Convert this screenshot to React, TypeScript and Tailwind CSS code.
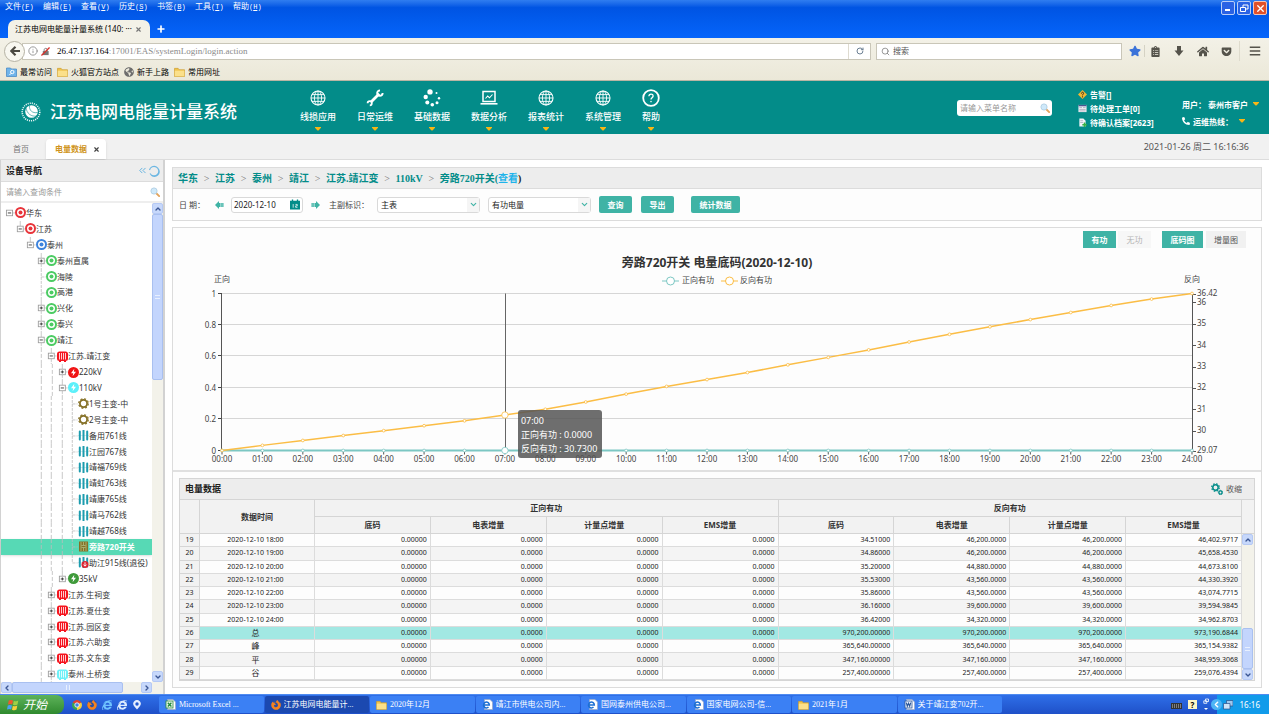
import React from "react";
import {
  FaStar, FaClipboardList, FaHome, FaGetPocket, FaBars, FaPhoneAlt,
  FaGlobeAmericas, FaInternetExplorer, FaFirefoxBrowser,
} from "react-icons/fa";
import { Search, RotateCw, ChevronDown, ChevronUp, ChevronLeft, ChevronRight, ChevronsLeft, Info, X, Plus } from "lucide-react";

/* ---------- small drawings ---------- */

const Caret = ({ className = "" }: { className?: string }) => (
  <svg viewBox="0 0 6 4" className={`h-[4px] w-[6px] shrink-0 ${className}`}><path d="M0 0h6v.8L3.500 3.400h-1L0 .8z" fill="#f9b615" /></svg>
);

const Folder = () => (
  <svg viewBox="0 0 12 11" className="h-[10px] w-[11px] shrink-0">
    <path d="M.5 1.500h4l1 1.500h6v7.500H.5z" fill="#f0c34a" stroke="#c99a2a" strokeWidth=".7" />
    <path d="M.8 4h10.500v6.200H.8z" fill="#fbe08a" />
  </svg>
);

const Magnifier = () => (
  <svg viewBox="0 0 12 12" className="h-[10px] w-[10px] shrink-0">
    <path d="M7.500 7.500l3.500 3.500" stroke="#e3a45c" strokeWidth="2.200" strokeLinecap="round" />
    <circle cx="4.800" cy="4.800" r="3.700" fill="#cfe9fa" stroke="#b4d2e6" strokeWidth="1.200" />
  </svg>
);

const GridGlobe = () => (
  <svg viewBox="0 0 18 18" className="h-[18px] w-[18px]" fill="none" stroke="#fff">
    <circle cx="9" cy="9" r="7" strokeWidth="1.100" />
    <ellipse cx="9" cy="9" rx="3.600" ry="7" strokeWidth=".9" />
    <path d="M9 2v14M2 9h14M3 5.600h12M3 12.400h12" strokeWidth=".9" />
  </svg>
);

const SlimWrench = () => (
  <svg viewBox="0 0 18 18" className="h-[18px] w-[18px]" fill="none" stroke="#fff">
    <path d="M4.800 13.200l8.400-8.400" strokeWidth="2.800" />
    <path d="M14 1.400A2.700 2.700 0 1 0 16.600 4" strokeWidth="2" />
    <path d="M1.600 14.200A2.100 2.100 0 1 1 3.800 16.400" strokeWidth="1.800" />
  </svg>
);

const DotRing = () => (
  <svg viewBox="0 0 18 18" className="h-[18px] w-[18px]" fill="#fff">
    <circle cx="7" cy="2.900" r="2.700" /><circle cx="2.700" cy="8" r="2.200" /><circle cx="4.300" cy="13.500" r="2" />
    <circle cx="9.300" cy="15.700" r="1.800" /><circle cx="14" cy="13.800" r="1.500" /><circle cx="16" cy="9.300" r="1.200" />
    <circle cx="13.500" cy="4" r="1" />
  </svg>
);

const LaptopChart = () => (
  <svg viewBox="0 0 18 18" className="h-[18px] w-[18px]" fill="none" stroke="#fff">
    <path d="M3 2.500h12v10H3z" strokeWidth="1.500" />
    <path d="M.5 14.800h17" strokeWidth="1.600" />
    <path d="M5.500 9.500l2.200-2.500 1.800 1.800 3-3.300" strokeWidth="1.100" />
  </svg>
);

const HelpRing = () => (
  <svg viewBox="0 0 18 18" className="h-[18px] w-[18px]" fill="none" stroke="#fff">
    <circle cx="9" cy="9" r="7.800" strokeWidth="1.800" />
    <path d="M6.900 7.300c0-3 4.400-2.900 4.200-.2-.1 1.600-2.100 1.700-2.100 3.400" strokeWidth="1.300" />
    <circle cx="9" cy="12.600" r=".5" strokeWidth=".8" />
  </svg>
);

const GridLogo = () => (
  <svg viewBox="0 0 20 20" className="h-[20px] w-[20px] shrink-0">
    <circle cx="10" cy="10" r="8.800" fill="none" stroke="#e9f7f6" strokeWidth="1.600" strokeDasharray="1.100 1" />
    <circle cx="10.500" cy="9.500" r="6.300" fill="#fff" />
    <path d="M5 6c1 5.500 5 9 11 8M8.500 3.500c-.5 5 3 8 8 7" stroke="#038c89" strokeWidth=".6" fill="none" />
  </svg>
);

const ArrowHand = ({ flip = false }: { flip?: boolean }) => (
  <svg viewBox="0 0 9 8" className={flip ? "h-[8px] w-[9px] -scale-x-100" : "h-[8px] w-[9px]"}>
    <path d="M0 4l4-4v2h4.500v4H4v2z" fill="#3fb3a5" /><path d="M5.500 2v4M7 2v4" stroke="#e9f7f5" strokeWidth=".5" />
  </svg>
);

const CalendarGlyph = () => (
  <svg viewBox="0 0 11 11" className="h-[11px] w-[10px] shrink-0">
    <path d="M0 1.500h2V0h1.500v1.500h4V0H9v1.500h2V11H0z" fill="#038c89" />
    <path d="M3.500 5v4M6 5.400h2v1.600H6.200v1.600h2" stroke="#fff" strokeWidth=".8" fill="none" />
  </svg>
);

const Gears = () => (
  <svg viewBox="0 0 12 12" className="h-[12px] w-[12px]" fill="none" stroke="#038c89">
    <circle cx="4.500" cy="4.500" r="3.800" strokeWidth="1.200" strokeDasharray="1.600 1.400" /><circle cx="4.500" cy="4.500" r="2.700" strokeWidth="1.500" />
    <circle cx="9.500" cy="9.500" r="1.600" strokeWidth="1.300" /><circle cx="9.500" cy="9.500" r="2.200" strokeWidth=".8" strokeDasharray="1 .8" />
  </svg>
);

type Kind = "red" | "blue" | "green" | "station" | "stationCyan" | "boltRed" | "boltCyan" | "boltGreen" | "gear" | "line" | "switch" | "retired";

const ring = (c: string) => (
  <><circle cx="5.500" cy="5.500" r="4.500" fill="#fff" stroke={c} strokeWidth="2" /><circle cx="5.500" cy="5.500" r="2" fill={c} /></>
);
const bolt = (c: string) => (
  <><circle cx="5.500" cy="5.500" r="5.500" fill={c} /><path d="M6.300 1.800L3 6.200h2.200l-.6 3L8 4.700H5.800z" fill="#fff" /></>
);
const station = (c: string) => (
  <><rect x="0" y=".5" width="11" height="9.500" rx="2.500" fill={c} />
    <path d="M2.500 2v6.500M4.500 2v6.500M6.500 2v6.500M8.500 2v6.500" stroke="#fff" strokeWidth=".8" /><path d="M2 10.500h2M7 10.500h2" stroke={c} /></>
);
const lines = (
  <>
    <path d="M0 5.500h11" stroke="#b5dfe5" strokeWidth=".6" />
    <path d="M1.800 1.500v8M5.500 .5v10M9.200 1.500v8" stroke="#1d9cae" strokeWidth="2" strokeLinecap="round" />
  </>
);

const NodeIcon = ({ kind }: { kind: Kind }) => (
  <svg viewBox="0 0 11 11" className="h-[11px] w-[11px] shrink-0">
    {kind === "red" && ring("#e8343a")}
    {kind === "blue" && ring("#3d83dd")}
    {kind === "green" && ring("#4ccb63")}
    {kind === "station" && station("#f5141e")}
    {kind === "stationCyan" && station("#6cf1f7")}
    {kind === "boltRed" && bolt("#f01414")}
    {kind === "boltCyan" && bolt("#5cf0fa")}
    {kind === "boltGreen" && bolt("#3f9a3a")}
    {kind === "gear" && (
      <><circle cx="5.500" cy="5.500" r="4.800" fill="none" stroke="#857026" strokeWidth="1.200" strokeDasharray="2 1.770" />
        <circle cx="5.500" cy="5.500" r="3.600" fill="#fff" stroke="#857026" strokeWidth="1.800" /></>
    )}
    {kind === "line" && lines}
    {kind === "retired" && <>{lines}<circle cx="7" cy="7.500" r="3.500" fill="#dc2430" /><path d="M7 5.300v3.700M5.500 7.600L7 9.200l1.500-1.600" stroke="#fff" strokeWidth=".9" fill="none" /></>}
    {kind === "switch" && <><rect x="1" y=".5" width="9" height="10" fill="#857026" /><path d="M5.500 1v3M5.500 7v3M3.500 4.500h4M3.500 6.500h4M3 1v9M8 1v9" stroke="#b8c98c" strokeWidth=".7" /></>}
  </svg>
);

/* ---------- browser frame ---------- */

const menus: [string, string][] = [["文件", "F"], ["编辑", "E"], ["查看", "V"], ["历史", "S"], ["书签", "B"], ["工具", "T"], ["帮助", "H"]];

const BrowserFrame = () => (
  <div>
    <div className="relative flex h-[38px] flex-col justify-between bg-linear-to-b from-[#2f7df0] via-[#0054e3] via-20% to-[#0665fb]">
      <nav className="flex h-[12px] items-center pl-[5px]">
        {menus.map(([name, key]) => (
          <button key={key} className="w-[38px] text-left text-[8px] leading-[12px] whitespace-nowrap text-white">
            {name}<span className="font-['Liberation_Mono',monospace] text-[7px]">(<u>{key}</u>)</span>
          </button>
        ))}
      </nav>
      <div className="absolute top-[1px] right-[2px] flex gap-[2px]">
        <button aria-label="最小化" className="flex h-[14px] w-[14px] items-end justify-start rounded-[2px] border border-[#b9cdf7] bg-[#2a62e4] p-[3px]"><span className="h-[2px] w-[5px] bg-white" /></button>
        <button aria-label="还原" className="h-[14px] w-[14px] rounded-[2px] border border-[#b9cdf7] bg-[#2a62e4]">
          <svg viewBox="0 0 12 12" className="h-full w-full" fill="none" stroke="#fff"><path d="M5 5V3h5v4H8M2.500 5.500h5v4h-5z" /></svg>
        </button>
        <button aria-label="关闭" className="flex h-[14px] w-[14px] items-center justify-center rounded-[2px] border border-[#f3c4b5] bg-[#e0502a]"><X className="h-[11px] w-[11px] text-white" strokeWidth={3} /></button>
      </div>
      <div className="flex items-end">
        <div className="ml-[8px] flex h-[18px] w-[142px] items-center rounded-t-[7px] bg-[#f3f1e7] pr-[8px] pl-[7px]">
          <span className="flex-1 text-[8px] whitespace-nowrap text-black">江苏电网电能量计量系统 (140: ···</span>
          <X className="h-[7px] w-[7px] text-[#777]" strokeWidth={4} />
        </div>
        <Plus className="mb-[4px] ml-[6px] h-[10px] w-[10px] text-white" strokeWidth={4} />
      </div>
    </div>
    <div className="h-[43px] border-b border-[#b9b5a4] bg-linear-to-b from-[#f3f1e7] to-[#ebe8d8]">
      <div className="flex h-[26px] items-center pl-[4px]">
        <button aria-label="后退" className="z-10 -mr-[3px] flex h-[21px] w-[21px] shrink-0 items-center justify-center rounded-full border border-[#b5b2a4] bg-[#f8f7f0]">
          <svg viewBox="0 0 10 10" className="h-[10px] w-[10px]" fill="none" stroke="#4b4942" strokeWidth="2.200"><path d="M5.500 .8L1.300 5l4.200 4.200M1.500 5H10" /></svg>
        </button>
        <div className="flex h-[17px] flex-1 items-center border border-[#c9c6b8] bg-white">
          <Info className="ml-[5px] h-[10px] w-[10px] text-[#888]" />
          <svg viewBox="0 0 10 10" className="ml-[3px] h-[9px] w-[9px]"><path d="M2 4.500h6.500v4.500H2z" fill="#777" /><path d="M3.500 4.500V3c0-2 3.500-2 3.500 0v1.500" stroke="#777" fill="none" /><path d="M.5 9.500l9-9" stroke="#d9302a" strokeWidth="1.400" /></svg>
          <p className="ml-[7px] flex-1 font-['Liberation_Serif',serif] text-[9px] leading-[15px] text-[#8a8a8a]"><span className="text-black">26.47.137.164</span>:17001/EAS/systemLogin/login.action</p>
          <button aria-label="刷新" className="flex h-full w-[22px] items-center justify-center border-l border-[#dedbd0]"><RotateCw className="h-[8px] w-[8px] text-[#6b7f93]" strokeWidth={3} /></button>
        </div>
        <label className="ml-[5px] flex h-[17px] w-[246px] items-center border border-[#c9c6b8] bg-white pl-[4px]">
          <Search className="h-[9px] w-[9px] text-[#777]" />
          <input aria-label="搜索" placeholder="搜索" className="ml-[3px] min-w-0 flex-1 text-[8px] outline-none placeholder:text-[#555]" />
        </label>
        <div className="flex items-center pr-[8px] pl-[7px] text-[#55534b]">
          <FaStar className="h-[12px] w-[12px] text-[#3b73d9]" />
          <span className="mx-[3px] h-[12px] w-px bg-[#d5d2c4]" />
          <FaClipboardList className="ml-[2px] h-[11px] w-[11px]" />
          <svg viewBox="0 0 10 10" className="ml-[13px] h-[10px] w-[10px]" fill="currentColor"><path d="M3 0h4v4.500h2.500L5 10 .5 4.500H3z" /></svg>
          <FaHome className="ml-[13px] h-[11px] w-[12px]" />
          <FaGetPocket className="ml-[12px] h-[11px] w-[11px]" />
          <span className="mx-[7px] h-[20px] w-px bg-[#dedbcd]" />
          <FaBars className="ml-[2px] h-[12px] w-[12px]" />
        </div>
      </div>
      <div className="flex h-[16px] items-center gap-[5px] pl-[6px] text-[8px] leading-[16px] text-black">
        <a href="#visited" className="flex items-center gap-[3px] whitespace-nowrap">
          <svg viewBox="0 0 11 10" className="h-[10px] w-[11px]"><path d="M.5 1h4l1 1h5v7.500H.5z" fill="#6fb4ea" stroke="#3f83c2" strokeWidth=".7" /><circle cx="6.300" cy="5" r="1.700" fill="none" stroke="#fff" /><path d="M5 6.300L3.500 8" stroke="#fff" /></svg>最常访问</a>
        <a href="#official" className="flex items-center gap-[3px] whitespace-nowrap"><Folder />火狐官方站点</a>
        <a href="#start" className="flex items-center gap-[3px] whitespace-nowrap"><FaGlobeAmericas className="h-[10px] w-[10px] text-[#6d6d6d]" />新手上路</a>
        <a href="#common" className="flex items-center gap-[3px] whitespace-nowrap"><Folder />常用网址</a>
      </div>
    </div>
  </div>
);

/* ---------- application header ---------- */

const navItems: { name: string; icon: React.ReactNode }[] = [
  { name: "线损应用", icon: <GridGlobe /> },
  { name: "日常运维", icon: <SlimWrench /> },
  { name: "基础数据", icon: <DotRing /> },
  { name: "数据分析", icon: <LaptopChart /> },
  { name: "报表统计", icon: <GridGlobe /> },
  { name: "系统管理", icon: <GridGlobe /> },
  { name: "帮助", icon: <HelpRing /> },
];

const AppHeader = () => (
  <header className="flex h-[53px] shrink-0 bg-[#038c89] text-white">
    <div className="flex w-[300px] shrink-0 items-center gap-[9px] pt-[9px] pl-[21px]">
      <GridLogo />
      <h1 className="text-[17px] font-medium whitespace-nowrap">江苏电网电能量计量系统</h1>
    </div>
    <nav className="flex gap-[21px] pt-[8px]">
      {navItems.map((n) => (
        <a key={n.name} href="#menu" className="flex flex-col items-center text-[9px] leading-[12px] font-medium whitespace-nowrap">
          {n.icon}<span className="mt-[4px]">{n.name}</span><Caret className="mt-[4px]" />
        </a>
      ))}
    </nav>
    <div className="ml-auto flex items-center">
      <label className="mr-[26px] flex h-[16px] w-[95px] items-center rounded-[3px] bg-white pr-[2px] pl-[3px]">
        <input aria-label="菜单搜索" placeholder="请输入菜单名称" className="min-w-0 flex-1 text-[8px] outline-none placeholder:text-[#999]" /><Magnifier />
      </label>
      <ul className="w-[104px] pt-[2px] text-[8px] leading-[14px] font-bold">
        <li className="flex items-center gap-[3px]"><svg viewBox="0 0 10 10" className="h-[9px] w-[9px]"><path d="M5 0l5 5-5 5-5-5z" fill="#f2b632" /><path d="M3.800 4c0-2 2.600-1.800 2.400-.2C6 4.700 5 4.800 5 6M5 7v1.200" stroke="#222" fill="none" /></svg>告警[]</li>
        <li className="flex items-center gap-[3px]"><svg viewBox="0 0 10 10" className="h-[9px] w-[9px]"><path d="M.5 1h9v8h-9z" fill="#f3f3f8" /><path d="M.5 1.800h9" stroke="#4b5590" strokeWidth="1.500" /><path d="M1.500 4h3M1.500 6h7M5.500 4h3M1.500 7.700h7" stroke="#9a9ab0" strokeWidth=".8" /></svg>待处理工单[0]</li>
        <li className="flex items-center gap-[3px]"><svg viewBox="0 0 10 10" className="h-[9px] w-[9px]"><path d="M1.500 .5H6L8.500 3v6.500h-7z" fill="#f3f3f8" /><path d="M2.500 3h3M2.500 5h3" stroke="#9a9ab0" strokeWidth=".7" /><path d="M7.300 5v5M4.800 7.500h5" stroke="#35b045" strokeWidth="1.800" /></svg>待确认档案[2623]</li>
      </ul>
      <div className="w-[87px] pt-[10px] text-[8px] leading-[17px] font-bold">
        <button className="flex items-center gap-[5px] whitespace-nowrap"><span>用户： 泰州市客户</span><Caret /></button>
        <button className="flex items-center whitespace-nowrap"><FaPhoneAlt className="mr-[3px] h-[8px] w-[8px]" /><span>运维热线：</span><Caret className="ml-[6px]" /></button>
      </div>
    </div>
  </header>
);

const TabStrip = () => (
  <div className="flex h-[26px] shrink-0 items-end border-b border-[#dcdcdc] bg-[#f1f1f1] text-[8px]">
    <button className="ml-[13px] pb-[4px] text-[#777]">首页</button>
    <div className="ml-[17px] flex h-[20px] w-[60px] items-center justify-between rounded-t-[4px] bg-white pr-[6px] pl-[9px] font-bold text-[#cf9420] shadow-sm">
      电量数据<X className="h-[7px] w-[7px] text-[#444]" strokeWidth={4} />
    </div>
    <time className="mr-[20px] ml-auto pb-[6px] text-[9px] text-[#555]">2021-01-26 周二 16:16:36</time>
  </div>
);

/* ---------- device tree ---------- */

type Row = { name: string; depth: number; kind: Kind; state?: "open" | "closed"; last?: boolean };
const leaf = (name: string, kind: Kind = "line"): Row => ({ name, depth: 6, kind });
const rows: Row[] = [
  { name: "华东", depth: 0, kind: "red", state: "open" },
  { name: "江苏", depth: 1, kind: "red", state: "open" },
  { name: "泰州", depth: 2, kind: "blue", state: "open" },
  { name: "泰州直属", depth: 3, kind: "green", state: "closed" },
  { name: "海陵", depth: 3, kind: "green" },
  { name: "高港", depth: 3, kind: "green" },
  { name: "兴化", depth: 3, kind: "green", state: "closed" },
  { name: "泰兴", depth: 3, kind: "green", state: "closed" },
  { name: "靖江", depth: 3, kind: "green", state: "open" },
  { name: "江苏.靖江变", depth: 4, kind: "station", state: "open" },
  { name: "220kV", depth: 5, kind: "boltRed", state: "closed" },
  { name: "110kV", depth: 5, kind: "boltCyan", state: "open" },
  leaf("1号主变-中", "gear"),
  leaf("2号主变-中", "gear"),
  leaf("备用761线"),
  leaf("江园767线"),
  leaf("靖福769线"),
  leaf("靖虹763线"),
  leaf("靖康765线"),
  leaf("靖马762线"),
  leaf("靖越768线"),
  leaf("旁路720开关", "switch"),
  { name: "助江915线(退役)", depth: 6, kind: "retired", last: true },
  { name: "35kV", depth: 5, kind: "boltGreen", state: "closed", last: true },
  { name: "江苏.生祠变", depth: 4, kind: "station", state: "closed" },
  { name: "江苏.夏仕变", depth: 4, kind: "station", state: "closed" },
  { name: "江苏.园区变", depth: 4, kind: "station", state: "closed" },
  { name: "江苏.六助变", depth: 4, kind: "station", state: "closed" },
  { name: "江苏.文东变", depth: 4, kind: "station", state: "closed" },
  { name: "泰州.土桥变", depth: 4, kind: "stationCyan", state: "closed" },
];
const indent = ["w-[11px]", "w-[21px]", "w-[32px]", "w-[42px]", "w-[53px]", "w-[64px]", "w-[74px]"];

const GuideCell = ({ column, row }: { column: number; row: Row }) => {
  const own = column === row.depth;
  return (
    <svg viewBox="0 0 10 16" preserveAspectRatio="none" className="min-w-0 flex-1" fill="none" stroke="#bdbdbd" strokeWidth=".8">
      {!own && column > 2 && <path d="M5 0v16" strokeDasharray="4 2" />}
      {own && !row.state && <path d={row.last ? "M5 0v8M5 8h5" : "M5 0v16M5 8h5"} strokeDasharray="3 1" />}
      {own && row.state && (
        <>
          {row.depth > 0 && <path d="M5 0v5" />}
          {row.depth > 2 && !row.last && <path d="M5 11v5" strokeDasharray="3 1" />}
          <path d="M8 8h2" />
          <rect x="2.200" y="5.200" width="5.600" height="5.600" fill="#fff" stroke="#999" />
          <path d={row.state === "closed" ? "M3.500 8h3M5 6.500v3" : "M3.500 8h3"} stroke="#222" />
        </>
      )}
    </svg>
  );
};

const scrollButton = "flex h-[11px] w-[11px] shrink-0 items-center justify-center rounded-[2px] border border-[#b5c9f5] bg-[#c7d8fb] text-[#3a5592]";
const thumb = "flex items-center justify-center rounded-[2px] border border-[#a9c0f0] bg-[#c3d5fd]";

const Sidebar = () => (
  <aside className="flex w-[165px] shrink-0 flex-col border-r-2 border-l border-[#d2d2d2] bg-white">
    <div className="flex h-[22px] items-center border-b border-[#dcdcdc] bg-[#ededed] pr-[3px] pl-[5px]">
      <h2 className="text-[9px] font-bold text-[#222]">设备导航</h2>
      <ChevronsLeft className="ml-auto h-[11px] w-[11px] text-[#5aaede]" />
      <svg viewBox="0 0 12 12" className="h-[12px] w-[12px]" fill="none" stroke="#6bb6e2"><path d="M2 8.500a4.700 4.700 0 1 0-.5-3.500M10 3.500a4.700 4.700 0 0 1-7 6.300" strokeWidth="1.100" /></svg>
    </div>
    <label className="flex h-[21px] items-center border-b-2 border-[#eee] pr-[3px] pl-[5px]">
      <input aria-label="设备查询" placeholder="请输入查询条件" className="min-w-0 flex-1 text-[8px] outline-none placeholder:text-[#999]" /><Magnifier />
    </label>
    <div className="flex flex-1">
      <ul className="flex flex-1 flex-col pt-[2px]">
        {rows.map((r) => (
          <li key={r.name} className={`flex grow basis-[14px] items-center overflow-hidden pl-[3px] text-[8px] whitespace-nowrap ${r.kind === "switch" ? "bg-[#57d9b5] font-bold text-white shadow" : "text-[#333]"}`}>
            <span className={`flex shrink-0 self-stretch ${indent[r.depth]}`}>
              {Array.from({ length: r.depth + 1 }, (_, i) => <GuideCell key={i} column={i} row={r} />)}
            </span>
            <NodeIcon kind={r.kind} />
            <span className="leading-[10px]">{r.name}</span>
          </li>
        ))}
      </ul>
      <div className="flex w-[11px] flex-col bg-[#f3f2ea]">
        <button aria-label="向上滚动" className={scrollButton}><ChevronUp className="h-[8px] w-[8px]" strokeWidth={4} /></button>
        <div className={`h-[166px] ${thumb}`}><span className="h-[4px] w-[5px] border-y border-[#e8f0ff]" /></div>
        <button aria-label="向下滚动" className={`mt-auto ${scrollButton}`}><ChevronDown className="h-[8px] w-[8px]" strokeWidth={4} /></button>
      </div>
    </div>
    <div className="flex h-[12px] bg-[#f3f2ea] pr-[11px]">
      <button aria-label="向左滚动" className={scrollButton}><ChevronLeft className="h-[8px] w-[8px]" strokeWidth={4} /></button>
      <div className={`h-[11px] w-[111px] ${thumb}`}><span className="h-[5px] w-[4px] border-x border-[#e8f0ff]" /></div>
      <button aria-label="向右滚动" className={`ml-auto ${scrollButton}`}><ChevronRight className="h-[8px] w-[8px]" strokeWidth={4} /></button>
    </div>
  </aside>
);

/* ---------- query panel ---------- */

const crumbs = ["华东", "江苏", "泰州", "靖江", "江苏.靖江变", "110kV"];
const solid = "h-[17px] rounded-[2px] bg-[#3fb3a5] text-[8px] leading-[17px] font-bold text-white";

const Select = ({ label, value }: { label: string; value: string }) => (
  <span className="relative ml-[8px] flex h-[16px] w-[103px] items-center">
    <select aria-label={label} className="h-full w-full appearance-none rounded-[3px] border border-[#d9d9d9] bg-white pl-[3px] text-[8px] text-[#222]"><option>{value}</option></select>
    <span className="pointer-events-none absolute top-[1px] right-[1px] bottom-[1px] flex w-[12px] items-center justify-center bg-[#f5f5f5]"><ChevronDown className="h-[9px] w-[9px] text-[#3fb3a5]" strokeWidth={3} /></span>
  </span>
);

const QueryPanel = () => (
  <section className="border border-[#dcdcdc] bg-[#fdfdfd]">
    <nav className="flex h-[21px] items-center gap-[5px] border-b border-[#dcdcdc] bg-[#ededed] pl-[5px] font-['Liberation_Serif','Noto_Sans_CJK_SC',serif] text-[10px] font-bold text-[#038c89]">
      {crumbs.map((c) => (
        <React.Fragment key={c}><a href="#node">{c}</a><span className="w-[7px] text-center font-normal text-[#777]">&gt;</span></React.Fragment>
      ))}
      <span>旁路720开关(<a href="#view" className="text-[#1fb4ea]">查看</a><span className="text-[#222]">)</span></span>
    </nav>
    <form className="flex h-[31px] items-center pl-[6px] text-[8px] text-[#444]">
      <label htmlFor="day" className="w-[36px] whitespace-pre">日 期：</label>
      <button type="button" aria-label="前一天"><ArrowHand /></button>
      <span className="ml-[7px] flex h-[16px] w-[72px] items-center rounded-[3px] border border-[#d9d9d9] bg-white pr-[2px] pl-[2px]">
        <input id="day" defaultValue="2020-12-10" className="min-w-0 flex-1 text-[8px] text-[#222] outline-none" /><CalendarGlyph />
      </span>
      <button type="button" aria-label="后一天" className="ml-[8px]"><ArrowHand flip /></button>
      <span className="ml-[9px] w-[40px] whitespace-nowrap">主副标识：</span>
      <Select label="主副标识" value="主表" />
      <Select label="电量类型" value="有功电量" />
      <button type="button" className={`ml-[8px] w-[33px] ${solid}`}>查询</button>
      <button type="button" className={`ml-[9px] w-[33px] ${solid}`}>导出</button>
      <button type="button" className={`ml-[17px] w-[49px] ${solid}`}>统计数据</button>
    </form>
  </section>
);

/* ---------- chart ---------- */

const LEFT = 49, RIGHT = 1019, TOP = 45.5, BOTTOM = 202.5, LOW = 29.07, HIGH = 36.42;
const readings = [29.07, 29.31, 29.54, 29.77, 30.0, 30.23, 30.46, 30.73, 31.0, 31.34, 31.71, 32.07, 32.39, 32.72, 33.08, 33.43, 33.78, 34.15, 34.51, 34.86, 35.2, 35.53, 35.86, 36.16, 36.42];
const px = (h: number) => LEFT + ((RIGHT - LEFT) * h) / 24;
const py = (v: number) => BOTTOM - ((v - LOW) / (HIGH - LOW)) * (BOTTOM - TOP);
const AMBER = "#fbbd45", TEAL = "#7cc7c3";

const Chart = () => (
  <svg viewBox="0 0 1088 222" className="block w-full text-[8px]" fill="#444">
    <text x="544" y="19" textAnchor="middle" className="text-[12px] font-bold" fill="#333">旁路720开关 电量底码(2020-12-10)</text>
    <path d="M489 33h17" stroke={TEAL} /><circle cx="497.500" cy="33" r="4" fill="#fff" stroke={TEAL} />
    <text x="509" y="35">正向有功</text>
    <path d="M548 33h17" stroke={AMBER} /><circle cx="556.500" cy="33" r="4" fill="#fff" stroke={AMBER} />
    <text x="567" y="35">反向有功</text>
    <text x={LEFT} y="34" textAnchor="middle">正向</text>
    <text x={RIGHT} y="34" textAnchor="middle">反向</text>
    {[0, 0.2, 0.4, 0.6, 0.8, 1].map((t) => {
      const y = Math.round(BOTTOM - t * (BOTTOM - TOP)) - 0.5;
      return (
        <g key={t}>
          <path d={`M${LEFT} ${y}H${RIGHT}`} stroke="#d6d6d6" />
          <path d={`M${LEFT - 4} ${y}h4`} stroke="#444" />
          <text x={LEFT - 6} y={y + 3} textAnchor="end">{t}</text>
        </g>
      );
    })}
    <path d={`M${LEFT - 0.5} ${TOP}V${BOTTOM}M${RIGHT + 0.5} ${TOP}V${BOTTOM}`} stroke="#555" />
    {[29.07, 30, 31, 32, 33, 34, 35, 36, 36.42].map((v) => (
      <g key={v}><path d={`M${RIGHT} ${Math.round(py(v)) + 0.5}h4`} stroke="#555" /><text x={RIGHT + 5} y={py(v) + 2.500}>{v}</text></g>
    ))}
    {readings.map((_, h) => (
      <g key={h}><path d={`M${px(h)} ${BOTTOM}v4`} stroke="#555" /><text x={px(h)} y="214" textAnchor="middle">{String(h).padStart(2, "0")}:00</text></g>
    ))}
    <path d={`M332.500 ${TOP}V${BOTTOM}`} stroke="#666" />
    <path d={`M${LEFT} ${BOTTOM}H${RIGHT}`} stroke={TEAL} strokeWidth="2" />
    <polyline points={readings.map((v, h) => `${px(h)},${py(v)}`).join(" ")} fill="none" stroke={AMBER} strokeWidth="1.500" />
    {readings.map((v, h) => (
      <g key={h} fill="#fff" strokeWidth=".8">
        <circle cx={px(h)} cy={BOTTOM} r={h === 7 ? 3.2 : 1.4} stroke={TEAL} />
        <circle cx={px(h)} cy={py(v)} r={h === 7 ? 3.2 : 1.4} stroke={AMBER} />
      </g>
    ))}
  </svg>
);

const ChartPanel = () => (
  <div className="border-b-2 border-[#e0e0e0] pt-[3px]">
    <div className="flex justify-end pr-[15px] text-[8px] leading-[17px]">
      <button className="w-[33px] bg-[#3fb3a5] font-bold text-white">有功</button>
      <button className="ml-[2px] w-[33px] bg-[#f7f7f7] text-[#b5b5b5]">无功</button>
      <button className="ml-[11px] w-[41px] bg-[#3fb3a5] font-bold text-white">底码图</button>
      <button className="ml-[3px] w-[40px] bg-[#f1f1f1] text-[#555]">增量图</button>
    </div>
    <div className="relative">
      <Chart />
      <div className="absolute top-[73%] left-[31.7%] rounded-[3px] bg-[#555]/85 pt-[4px] pr-[5px] pb-[2px] pl-[3px] text-[9px] leading-[14px] whitespace-nowrap text-white">
        <p>07:00</p><p>正向有功 : 0.0000</p><p>反向有功 : 30.7300</p>
      </div>
    </div>
  </div>
);

/* ---------- data table ---------- */

const same = (time: string, code: string, inc: string, ems: string) => [time, "0.00000", "0.0000", "0.0000", "0.0000", code, inc, inc, ems];
const data = [
  same("2020-12-10 18:00", "34.51000", "46,200.0000", "46,402.9717"),
  same("2020-12-10 19:00", "34.86000", "46,200.0000", "45,658.4530"),
  same("2020-12-10 20:00", "35.20000", "44,880.0000", "44,673.8100"),
  same("2020-12-10 21:00", "35.53000", "43,560.0000", "44,330.3920"),
  same("2020-12-10 22:00", "35.86000", "43,560.0000", "43,074.7715"),
  same("2020-12-10 23:00", "36.16000", "39,600.0000", "39,594.9845"),
  same("2020-12-10 24:00", "36.42000", "34,320.0000", "34,962.8703"),
  same("总", "970,200.00000", "970,200.0000", "973,190.6844"),
  same("峰", "365,640.00000", "365,640.0000", "365,154.9382"),
  same("平", "347,160.00000", "347,160.0000", "348,959.3068"),
  same("谷", "257,400.00000", "257,400.0000", "259,076.4394"),
];
const sub = ["底码", "电表增量", "计量点增量", "EMS增量"];
const th = "border-r border-b border-[#d5d5d5] p-0 font-bold";

const DataTable = () => (
  <section className="mx-[6px] mt-[6px] mb-[6px] flex flex-1 flex-col border border-[#d5d5d5]">
    <div className="flex h-[21px] shrink-0 items-center justify-between border-b border-[#d5d5d5] bg-[#ededed] pr-[12px] pl-[5px]">
      <h2 className="text-[9px] font-bold text-[#222]">电量数据</h2>
      <button className="flex items-center gap-[3px] text-[8px] text-[#555]"><Gears />收缩</button>
    </div>
    <div className="flex flex-1">
      <div className="min-w-0 flex-1">
        <table className="h-[180px] w-full table-fixed border-separate border-spacing-0 text-[7px] leading-[12px] text-[#222]">
          <colgroup><col className="w-[20px]" /><col className="w-[115px]" />{[...sub, ...sub].map((_, i) => <col key={i} />)}</colgroup>
          <thead className="bg-[#f2f2f2] text-[8px] text-[#333]">
            <tr className="h-[17px]"><th rowSpan={2} className={th} aria-label="序号" /><th rowSpan={2} className={th}>数据时间</th><th colSpan={4} className={th}>正向有功</th><th colSpan={4} className={th}>反向有功</th></tr>
            <tr className="h-[17px]">{[...sub, ...sub].map((s, i) => <th key={i} className={th}>{s}</th>)}</tr>
          </thead>
          <tbody>
            {data.map((d, i) => (
              <tr key={d[0]} className={i === 7 ? "bg-[#a2e8e3]" : i % 2 ? "bg-[#f4f4f4]" : "bg-[#fdfdfd]"}>
                <td className="border-r border-b border-[#d5d5d5] bg-[#f2f2f2] p-0 text-center">{19 + i}</td>
                {d.map((v, c) => <td key={c} className={`border-r border-b border-[#dcdcdc] py-0 pr-[3px] pl-0 ${c ? "text-right" : "text-center"} ${c === 0 && i > 6 ? "text-[8px]" : ""}`}>{v}</td>)}
              </tr>
            ))}
          </tbody>
        </table>
      </div>
      <div className="flex w-[12px] flex-col bg-[#f3f2ea]">
        <div className="h-[34px] border-b border-[#d5d5d5] bg-[#f2f2f2]" />
        <button aria-label="向上滚动" className={scrollButton}><ChevronUp className="h-[8px] w-[8px]" strokeWidth={4} /></button>
        <div className={`mt-auto h-[41px] w-[11px] ${thumb}`}><span className="h-[4px] w-[5px] border-y border-[#e8f0ff]" /></div>
        <button aria-label="向下滚动" className={scrollButton}><ChevronDown className="h-[8px] w-[8px]" strokeWidth={4} /></button>
      </div>
    </div>
  </section>
);

/* ---------- taskbar ---------- */

const Page = ({ kind }: { kind: "excel" | "web" | "word" }) => (
  <svg viewBox="0 0 11 11" className="h-[11px] w-[11px] shrink-0" fill="none">
    <path d="M2.500 .5H8L10.500 3v7.500h-8z" fill="#fff" stroke="#9aa7c4" strokeWidth=".7" />
    {kind === "excel" && <><rect x="1" y="2" width="7" height="7" fill="#e8f5e9" stroke="#2b8a3e" strokeWidth=".8" /><path d="M2.800 3.700l3.600 3.800M6.400 3.700L2.800 7.500" stroke="#1f8a3b" strokeWidth="1.300" /></>}
    {kind === "web" && <path d="M1.500 6h5.800a2.900 2.900 0 1 0-.8 2" stroke="#1c6fd4" strokeWidth="1.500" />}
    {kind === "word" && <><rect x="1" y="2" width="7" height="7" fill="#eaf1fc" stroke="#2b579a" strokeWidth=".8" /><path d="M2.300 3.700l1 3.600 1.200-3 1.200 3 1-3.600" stroke="#2b579a" strokeWidth="1.100" /></>}
  </svg>
);
const Fox = () => (
  <span className="flex h-[10px] w-[10px] shrink-0 items-center justify-center rounded-full bg-[#2a4fa5]"><FaFirefoxBrowser className="h-[10px] w-[10px] text-[#f58220]" /></span>
);
const tasks: { name: string; icon: React.ReactNode; active?: boolean }[] = [
  { name: "Microsoft Excel ...", icon: <Page kind="excel" /> },
  { name: "江苏电网电能量计...", icon: <Fox />, active: true },
  { name: "2020年12月", icon: <Folder /> },
  { name: "靖江市供电公司内...", icon: <Page kind="web" /> },
  { name: "国网泰州供电公司...", icon: <Page kind="web" /> },
  { name: "国家电网公司-信...", icon: <Page kind="web" /> },
  { name: "2021年1月", icon: <Folder /> },
  { name: "关于靖江变702开...", icon: <Page kind="word" /> },
];

const Taskbar = () => (
  <footer className="flex h-[20px] shrink-0 items-center border-t border-[#4f8bf0] bg-linear-to-b from-[#2f6fe8] to-[#1f50c8] text-white">
    <button className="flex h-full w-[64px] shrink-0 items-center gap-[4px] rounded-r-[8px] bg-linear-to-b from-[#5db35a] to-[#2f8a2e] pl-[7px] text-[12px] leading-none italic">
      <svg viewBox="0 0 12 12" className="h-[12px] w-[12px]">
        <path d="M1.800 1.500Q4 .3 6 1.500L5.200 5.500Q3.200 4.500 1 5.500z" fill="#f0582c" /><path d="M6.800 1.700Q9 2.800 11.300 1.600L10.500 5.600Q8.300 6.800 6 5.700z" fill="#9fd046" />
        <path d="M.8 6.500Q3 5.500 5 6.500L4.200 10.500Q2.200 9.400 0 10.500z" fill="#4aa0f0" /><path d="M5.800 6.700Q8 7.800 10.300 6.600L9.500 10.600Q7.300 11.800 5 10.700z" fill="#f8cf3c" />
      </svg>开始
    </button>
    <div className="flex w-[95px] shrink-0 items-center gap-[5px] pl-[8px]">
      <svg viewBox="0 0 10 10" className="h-[10px] w-[10px]">
        <path d="M5 5L.7 2.500A5 5 0 0 1 9.300 2.500z" fill="#e2402f" /><path d="M5 5l4.300-2.500A5 5 0 0 1 5 10z" fill="#f8cf3c" /><path d="M5 5v5A5 5 0 0 1 .7 2.500z" fill="#3ba54f" />
        <circle cx="5" cy="5" r="2.200" fill="#3f83e8" stroke="#fff" strokeWidth=".8" />
      </svg>
      <Fox />
      <FaInternetExplorer className="h-[10px] w-[10px] text-[#6fc3ff]" />
      <FaInternetExplorer className="h-[10px] w-[10px] text-[#dcecff]" />
      <svg viewBox="0 0 10 10" className="h-[10px] w-[10px]"><path d="M5 9.500L2 6a3.700 3.700 0 1 1 6 0z" fill="#e6efff" /><circle cx="5" cy="4" r="1.700" fill="#2158cf" /></svg>
    </div>
    <div className="flex h-full max-w-[844px] flex-1 items-center">
      {tasks.map((t) => (
        <button key={t.name} className={`mr-px flex h-[17px] min-w-0 flex-1 items-center gap-[3px] rounded-[2px] pl-[6px] text-left font-['Liberation_Serif','Noto_Sans_CJK_SC',serif] text-[8px] leading-[17px] whitespace-nowrap ${t.active ? "bg-[#1b49b0]" : "bg-[#3b80f4]"}`}>
          {t.icon}<span className="truncate">{t.name}</span>
        </button>
      ))}
    </div>
    <div className="ml-auto flex items-center gap-[6px] pr-[8px]">
      <svg viewBox="0 0 11 8" className="h-[8px] w-[11px]"><path d="M0 2h11v6H0z" fill="#333" /><path d="M1 4h9M1 6h9" stroke="#ccc" strokeDasharray="1 1" /></svg>
      <span className="flex h-[9px] w-[9px] items-center justify-center bg-[#fdf6c4] text-[8px] leading-none font-bold text-black">?</span>
      <svg viewBox="0 0 6 14" className="h-[14px] w-[6px]"><path d="M2.500 1h3v2.500h-3zM.8 2.800h3v2.500h-3z" fill="none" stroke="#fff" strokeWidth=".8" /><path d="M1 10h4l-2 2z" fill="#fff" /></svg>
    </div>
    <div className="flex h-full w-[52px] items-center bg-[#119bea]">
      <span className="-ml-[6px] flex h-[11px] w-[11px] items-center justify-center rounded-full bg-[#4db5f5]"><ChevronLeft className="h-[9px] w-[9px]" strokeWidth={4} /></span>
      <svg viewBox="0 0 10 10" className="ml-px h-[10px] w-[10px]"><path d="M3.500 .5H10V6H3.500z" fill="#9fc8ef" stroke="#2b4f86" strokeWidth=".7" /><path d="M.5 3.500H7V9H.5z" fill="#cfe4f8" stroke="#2b4f86" strokeWidth=".7" /></svg>
      <time className="mr-[9px] ml-auto text-[8px]">16:16</time>
    </div>
  </footer>
);

export default function App() {
  return (
    <div className="flex min-h-screen flex-col bg-white font-['Noto_Sans','Noto_Sans_CJK_SC',sans-serif]">
      <BrowserFrame />
      <AppHeader />
      <TabStrip />
      <div className="flex flex-1">
        <Sidebar />
        <main className="flex min-w-0 flex-1 flex-col gap-[6px] px-[7px] pt-[7px] pb-[6px]">
          <QueryPanel />
          <section className="flex flex-1 flex-col border border-[#dcdcdc] bg-[#fdfdfd]">
            <ChartPanel />
            <DataTable />
          </section>
        </main>
      </div>
      <Taskbar />
    </div>
  );
}
